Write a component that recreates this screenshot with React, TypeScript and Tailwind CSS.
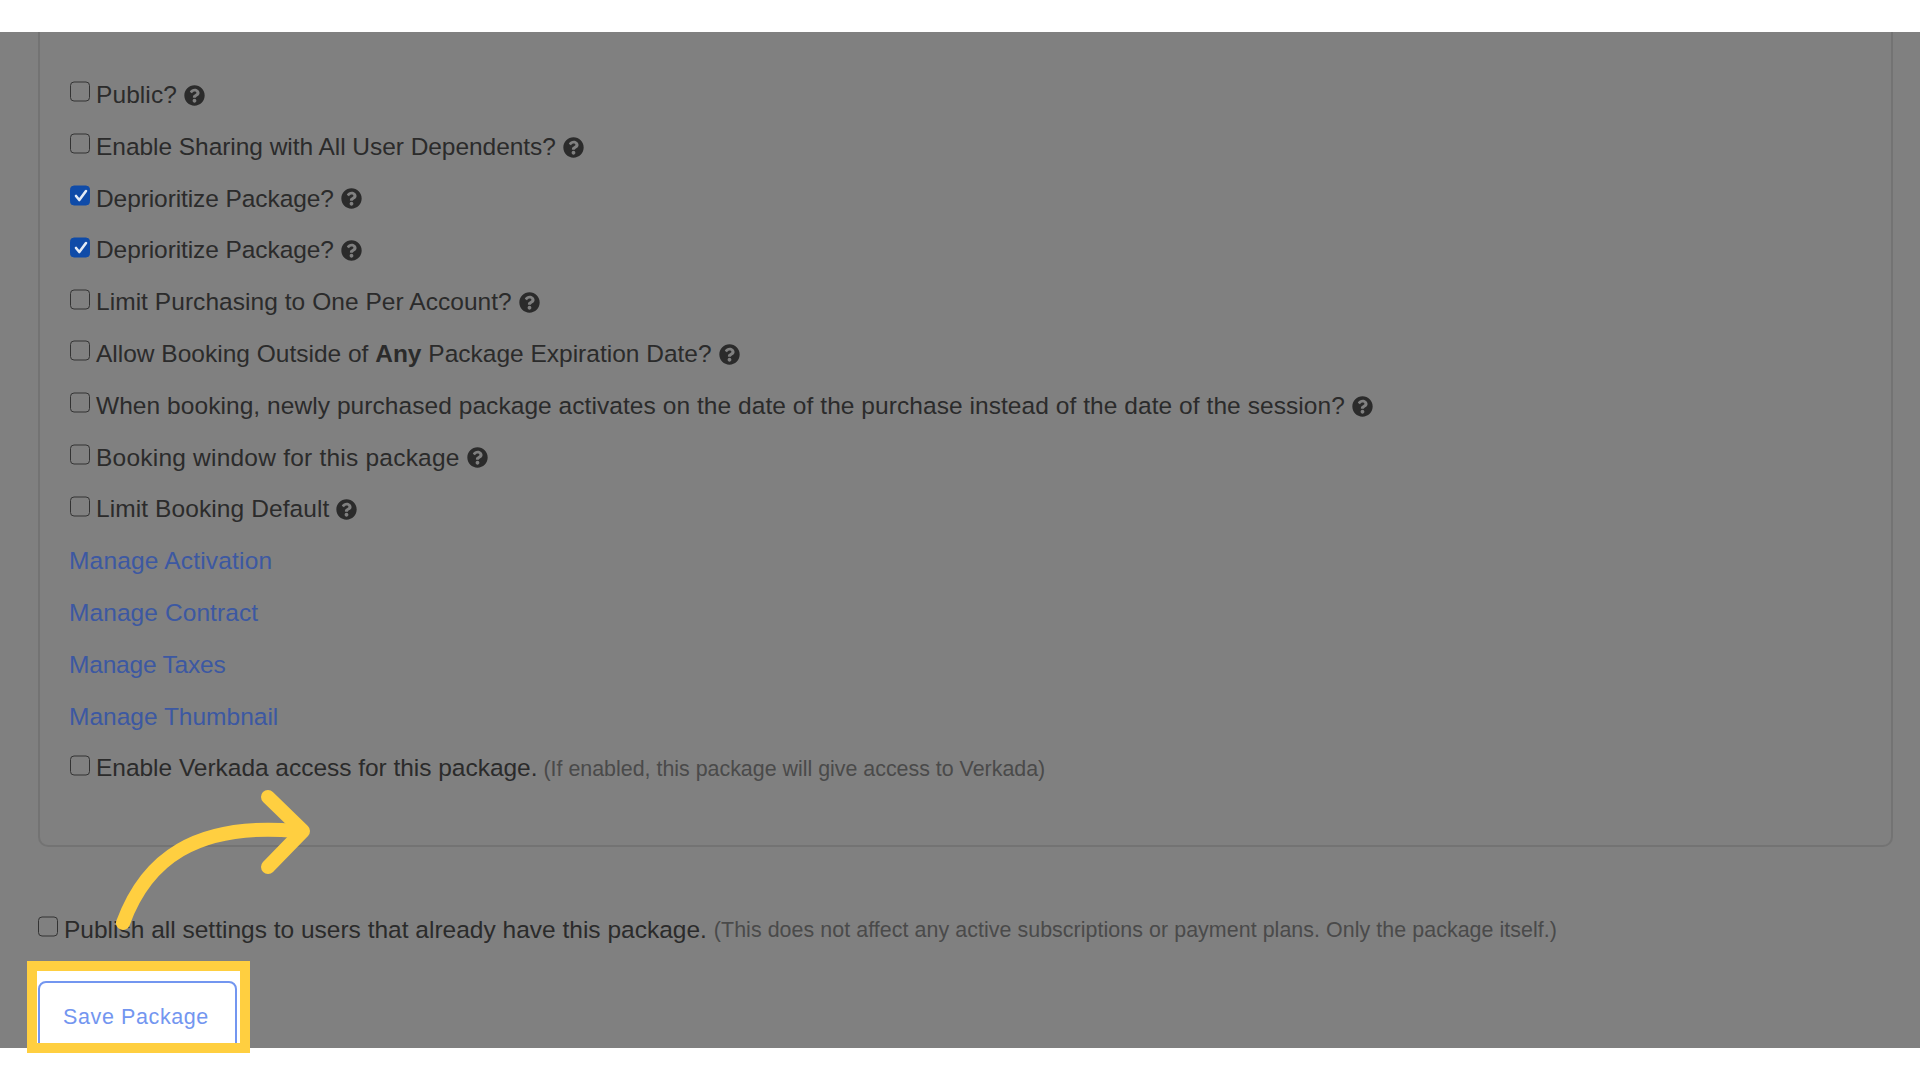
import React from "react";
import { FaQuestionCircle } from "react-icons/fa";

function Box({ checked = false, flush = false }: { checked?: boolean; flush?: boolean }) {
  return (
    <span
      className={
        "mr-[6px] flex h-[20px] w-[20px] shrink-0 -translate-y-[3.5px] items-center justify-center rounded-[4px] border-[1.5px] " +
        (flush ? "" : "ml-px ") +
        (checked ? "border-[#0f4ba8] bg-[#0f4ba8]" : "border-[#333333] bg-[#808080]")
      }
    >
      {checked && (
        <svg viewBox="0 0 20 20" className="h-[20px] w-[20px] shrink-0" fill="none" stroke="#e4ebf5" strokeWidth="2.6" strokeLinecap="round" strokeLinejoin="round">
          <path d="M6 10.5 L9.3 14.5 L16 5.5" />
        </svg>
      )}
    </span>
  );
}

function Check({ checked, flush, track = "", children }: { checked?: boolean; flush?: boolean; track?: string; children: React.ReactNode }) {
  return (
    <div className={"flex h-[51.8px] items-center whitespace-pre pt-px text-[24.5px] text-[#2b2b2b] " + track}>
      <Box checked={checked} flush={flush} />
      {children}
    </div>
  );
}

function Help() {
  return <FaQuestionCircle className="ml-[7px] text-[21px] text-[#2b2b2b]" />;
}

function LinkRow({ track = "", children }: { track?: string; children: React.ReactNode }) {
  return <div className={"flex h-[51.8px] items-center pt-px text-[24.5px] text-[#3c58a2] " + track}>{children}</div>;
}

export default function App() {
  return (
    <div className="relative flex h-[1080px] w-full flex-col overflow-hidden bg-white font-['Liberation_Sans',Arial,sans-serif]">
      <div className="h-[32px] shrink-0" />
      <main className="h-[1016px] shrink-0 overflow-hidden bg-[#808080] pl-[38px] pr-[27px]">
        <section className="h-[815px] rounded-b-[10px] border-x-2 border-b-2 border-[#737373] pl-[29px] pt-[37px]">
          <Check track="tracking-[0.08px]">Public?<Help /></Check>
          <Check track="tracking-[-0.045px]">Enable Sharing with All User Dependents?<Help /></Check>
          <Check checked track="tracking-[-0.09px]">Deprioritize Package?<Help /></Check>
          <Check checked track="tracking-[-0.09px]">Deprioritize Package?<Help /></Check>
          <Check track="tracking-[0.05px]">Limit Purchasing to One Per Account?<Help /></Check>
          <Check>
            Allow Booking Outside of <b className="font-bold">Any</b> Package Expiration Date?<Help />
          </Check>
          <Check track="tracking-[0.06px]">When booking, newly purchased package activates on the date of the purchase instead of the date of the session?<Help /></Check>
          <Check track="tracking-[0.22px]">Booking window for this package<Help /></Check>
          <Check track="tracking-[0.09px]">Limit Booking Default<Help /></Check>
          <LinkRow track="tracking-[0.18px]">Manage Activation</LinkRow>
          <LinkRow track="tracking-[0.08px]">Manage Contract</LinkRow>
          <LinkRow track="tracking-[-0.2px]">Manage Taxes</LinkRow>
          <LinkRow>Manage Thumbnail</LinkRow>
          <Check track="tracking-[-0.03px]">
            Enable Verkada access for this package.
            <span className="ml-[6px] text-[21.4px] tracking-normal text-[#4a4a4a]">(If enabled, this package will give access to Verkada)</span>
          </Check>
        </section>
        <div className="mt-[57px]">
          <Check flush>
            Publish all settings to users that already have this package.
            <span className="ml-[7px] text-[21.4px] tracking-[0.06px] text-[#4a4a4a]">(This does not affect any active subscriptions or payment plans. Only the package itself.)</span>
          </Check>
        </div>
      </main>

      <div className="absolute left-[27px] top-[961px] h-[92px] w-[223px] overflow-hidden border-[10.5px] border-[#ffcf40] bg-white">
        <button className="ml-px mt-[10px] h-[90px] w-[199px] rounded-[8px] border-2 border-[#7396f0] pb-[18px] pr-[3px] text-center text-[21.5px] tracking-[0.6px] text-[#7396f0]">
          Save Package
        </button>
      </div>

      <svg className="absolute left-0 top-0 h-[1080px] w-[1920px]" viewBox="0 0 1920 1080" fill="none" stroke="#ffcf40" strokeWidth="14" strokeLinecap="round" strokeLinejoin="round">
        <path d="M123 923 C 146 860, 195 822, 296 831" />
        <path d="M268 797 L303 831 L268 867" />
      </svg>
    </div>
  );
}
